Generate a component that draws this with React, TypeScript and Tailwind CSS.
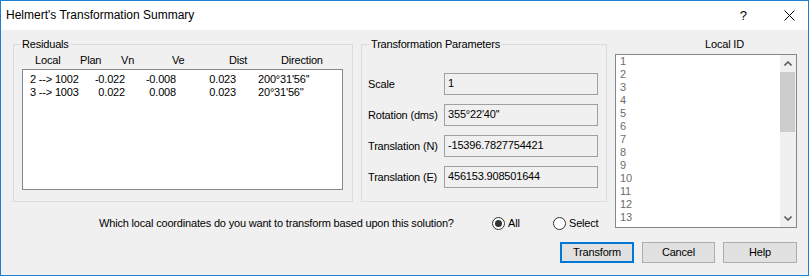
const residuals = [
  { local: '2 --> 1002', plan: '-0.022', vn: '-0.008', dist: '0.023', dir: "200°31'56''" },
  { local: '3 --> 1003', plan: '0.022', vn: '0.008', dist: '0.023', dir: "20°31'56''" },
]

const params = [
  ['Scale', '1'],
  ['Rotation (dms)', "355°22'40''"],
  ['Translation (N)', '-15396.7827754421'],
  ['Translation (E)', '456153.908501644'],
]

const localIds = Array.from({ length: 13 }, (_, i) => String(i + 1))

function Chevron({ down }: { down?: boolean }) {
  return (
    <svg width="8" height="5" viewBox="0 0 8 5" className={down ? 'rotate-180' : ''}>
      <path d="M0.5 4.5 L4 1 L7.5 4.5" fill="none" stroke="#606060" strokeWidth="1.6" />
    </svg>
  )
}

function Radio({ checked }: { checked?: boolean }) {
  return (
    <span className="flex h-[13px] w-[13px] shrink-0 items-center justify-center rounded-full border border-[#333] bg-white">
      {checked && <span className="h-[7px] w-[7px] rounded-full bg-[#333]" />}
    </span>
  )
}

export default function App() {
  return (
    <div className="flex h-[276px] w-[809px] flex-col border border-[#1a80d5] bg-[#f0f0f0] font-['Liberation_Sans',Arial,sans-serif] text-[11px] leading-[13px] tracking-[-0.18px] text-black">
      {/* title bar */}
      <div className="flex h-[29px] shrink-0 items-center bg-white pl-[5px] pr-[13px]">
        <span className="text-[12px] tracking-normal">Helmert's Transformation Summary</span>
        <span className="ml-auto mr-[37px] text-[13px] tracking-normal">?</span>
        <svg width="11" height="11" viewBox="0 0 11 11">
          <path d="M0.5 0.5 L10.5 10.5 M10.5 0.5 L0.5 10.5" stroke="#000" strokeWidth="1" />
        </svg>
      </div>

      <div className="flex flex-1 flex-col pl-[12px] pr-[11px] pt-[8px]">
        <div className="flex gap-[10px]">
          {/* left part */}
          <div className="flex w-[592px] shrink-0 flex-col">
            <div className="mt-[6px] flex h-[158px] gap-[8px]">
              {/* Residuals */}
              <div className="relative w-[340px] shrink-0 border border-[#dcdcdc] pl-[8px]">
                <span className="absolute -top-[7px] left-[7px] bg-[#f0f0f0] px-[1px]">Residuals</span>
                <div className="mt-[9px] flex pl-[13px]">
                  <span className="w-[45px]">Local</span>
                  <span className="w-[41px]">Plan</span>
                  <span className="w-[51px]">Vn</span>
                  <span className="w-[57px]">Ve</span>
                  <span className="w-[52px]">Dist</span>
                  <span>Direction</span>
                </div>
                <div className="mt-[2px] h-[121px] w-[321px] border border-[#828790] bg-white pl-[7px] pt-[3px]">
                  {residuals.map((r) => (
                    <div key={r.local} className="flex">
                      <span className="w-[55px]">{r.local}</span>
                      <span className="w-[40px] text-right">{r.plan}</span>
                      <span className="w-[51px] text-right">{r.vn}</span>
                      <span className="w-[60px] text-right">{r.dist}</span>
                      <span className="pl-[22px]">{r.dir}</span>
                    </div>
                  ))}
                </div>
              </div>

              {/* Transformation Parameters */}
              <div className="relative w-[246px] shrink-0 border border-[#dcdcdc] pl-[6px] pt-[28px]">
                <span className="absolute -top-[7px] left-[8px] bg-[#f0f0f0] px-[1px]">Transformation Parameters</span>
                <div className="flex flex-col gap-[9px]">
                  {params.map(([label, value]) => (
                    <div key={label} className="flex h-[22px] items-center">
                      <span className="w-[76px] shrink-0">{label}</span>
                      <div className="flex h-[22px] w-[154px] items-center border border-[#a0a0a0] bg-[#f0f0f0] pb-[2px] pl-[3px]">
                        {value}
                      </div>
                    </div>
                  ))}
                </div>
              </div>
            </div>

            {/* question row */}
            <div className="mt-[15px] flex h-[13px] items-center pl-[86px]">
              <span className="w-[393px] shrink-0">
                Which local coordinates do you want to transform based upon this solution?
              </span>
              <Radio checked />
              <span className="ml-[3px] w-[45px]">All</span>
              <Radio />
              <span className="ml-[3px]">Select</span>
            </div>
          </div>

          {/* Local ID */}
          <div className="flex w-[182px] shrink-0 flex-col">
            <span className="ml-[90px]">Local ID</span>
            <div className="mt-[3px] flex h-[174px] border border-[#828790] bg-white">
              <div className="flex-1 pl-[4px] text-[#6d6d6d]">
                {localIds.map((id) => (
                  <div key={id}>{id}</div>
                ))}
              </div>
              <div className="flex w-[16px] flex-col bg-[#f0f0f0]">
                <div className="flex h-[17px] items-center justify-center">
                  <Chevron />
                </div>
                <div className="h-[60px] w-[15px] bg-[#cdcdcd]" />
                <div className="flex-1" />
                <div className="flex h-[17px] items-center justify-center">
                  <Chevron down />
                </div>
              </div>
            </div>
          </div>
        </div>

        {/* buttons */}
        <div className="mt-[12px] flex justify-end gap-[8px]">
          <button className="h-[21px] w-[74px] border-2 border-[#0078d7] bg-[#e1e1e1]">Transform</button>
          <button className="h-[21px] w-[73px] border border-[#adadad] bg-[#e1e1e1]">Cancel</button>
          <button className="h-[21px] w-[74px] border border-[#adadad] bg-[#e1e1e1]">Help</button>
        </div>
      </div>
    </div>
  )
}
